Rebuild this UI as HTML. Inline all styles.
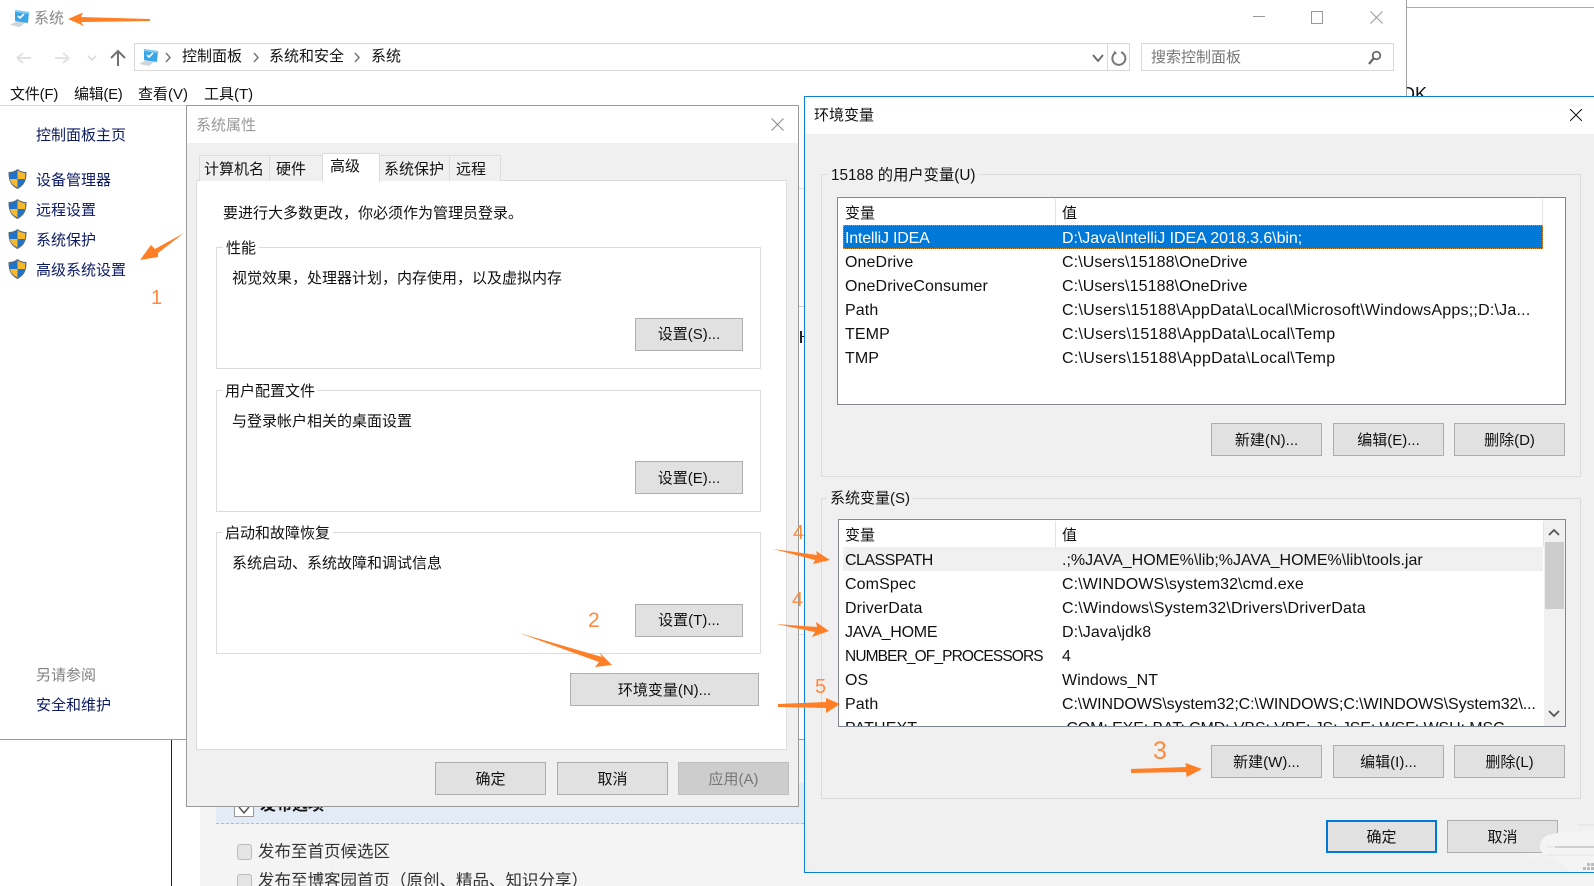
<!DOCTYPE html>
<html lang="zh-CN"><head><meta charset="utf-8"><title>系统</title>
<style>
html,body{margin:0;padding:0;background:#fff;}
#p{position:relative;width:1594px;height:886px;overflow:hidden;background:#fff;font-family:"Liberation Sans","Noto Sans CJK SC",sans-serif;font-size:15px;color:#111;text-spacing-trim:space-all;}
.a{position:absolute;box-sizing:border-box;}
.t{position:absolute;white-space:nowrap;line-height:20px;height:20px;margin-top:1px;}
.b{position:absolute;box-sizing:border-box;background:#e1e1e1;border:1px solid #adadad;text-align:center;white-space:nowrap;font-size:15px;color:#111;}
.g{position:absolute;box-sizing:border-box;border:1px solid #dcdcdc;}
.n{color:#0c1a63;}
.tab{position:absolute;box-sizing:border-box;top:155px;height:26px;background:#f0f0f0;border:1px solid #dcdcdc;border-bottom:0;}
.r{font-size:16px;letter-spacing:.1px;}
.num{position:absolute;color:#ff8a3c;font-size:20px;line-height:20px;font-weight:normal;}
</style></head><body><div id="p">

<!-- background page underneath -->
<div class="a" style="left:200px;top:739px;width:1394px;height:147px;background:#f4f4f4"></div>
<div class="a" style="left:171px;top:739px;width:1px;height:147px;background:#222"></div>
<div class="a" style="left:216px;top:783px;width:1378px;height:41px;background:#e3ecf6;border-bottom:1px dashed #bbb"></div>
<div class="a" style="left:234px;top:797px;width:20px;height:20px;background:#fff;border:1px solid #999"></div>
<svg class="a" style="left:237px;top:806px" width="14" height="9" viewBox="0 0 14 9" fill="none"><path d="M2 1l5 6 5-6" stroke="#555" stroke-width="1.500"/></svg>
<div class="t" style="left:260px;top:795px;font-size:16px;font-weight:bold">发布选项</div>
<div class="a" style="left:237px;top:844px;width:15px;height:16px;background:#e4e4e4;border:1px solid #bbb;border-radius:3px"></div>
<div class="t" style="left:258px;top:841px;font-size:16.500px;color:#333">发布至首页候选区</div>
<div class="a" style="left:237px;top:874px;width:15px;height:16px;background:#e4e4e4;border:1px solid #bbb;border-radius:3px"></div>
<div class="t" style="left:258px;top:870px;font-size:16.500px;color:#333">发布至博客园首页（原创、精品、知识分享）</div>

<!-- top right fragment -->
<div class="a" style="left:1406px;top:7px;width:188px;height:1px;background:#aaa"></div>
<div class="a" style="left:1407px;top:80px;width:30px;height:17px;overflow:hidden"><div class="t" style="left:-6px;top:3px;font-size:18px;line-height:20px;color:#111">OK</div></div>

<!-- main window -->
<div class="a" style="left:0;top:0;width:1407px;height:740px;background:#fff;border-right:1px solid #a0a0a0;border-bottom:1px solid #999"></div>
<svg class="a" style="left:9px;top:8px" width="22" height="20" viewBox="0 0 22 20"><path d="M1 17l7-4 9 1-6 5z" fill="#d0d5d9"/><path d="M6 2l14 2-1 11-13-2z" fill="#39a6e8"/><path d="M6 2l14 2-1 2-13-2z" fill="#7fcdf5"/><path d="M9 8l2 2 4-4" stroke="#fff" stroke-width="1.600" fill="none"/></svg>
<div class="t" style="left:34px;top:8px;color:#888">系统</div>
<svg class="a" style="left:14px;top:46px" width="120" height="24" viewBox="0 0 120 24" fill="none"><path d="M3 12H17M3 12l6-5M3 12l6 5" stroke="#e2e2e2" stroke-width="2"/><path d="M41 12H55M55 12l-6-5M55 12l-6 5" stroke="#e2e2e2" stroke-width="2"/><path d="M74 10l4 4 4-4" stroke="#dcdcdc" stroke-width="1.600"/><path d="M104 20V5M97 12l7-7 7 7" stroke="#707070" stroke-width="2"/></svg>
<div class="a" style="left:134px;top:43px;width:996px;height:28px;border:1px solid #d9d9d9"></div>
<svg class="a" style="left:138px;top:47px" width="22" height="20" viewBox="0 0 22 20"><path d="M1 17l7-4 9 1-6 5z" fill="#d0d5d9"/><path d="M6 2l14 2-1 11-13-2z" fill="#39a6e8"/><path d="M6 2l14 2-1 2-13-2z" fill="#7fcdf5"/><path d="M9 8l2 2 4-4" stroke="#fff" stroke-width="1.600" fill="none"/></svg>
<svg class="a" style="left:160px;top:48px" width="210" height="20" viewBox="0 0 210 20" fill="none" stroke="#777" stroke-width="1.500"><path d="M6 5l4 4.500-4 4.500M94 5l4 4.500-4 4.500M195 5l4 4.500-4 4.500"/></svg>
<div class="t" style="left:182px;top:46px">控制面板</div>
<div class="t" style="left:269px;top:46px">系统和安全</div>
<div class="t" style="left:371px;top:46px">系统</div>
<svg class="a" style="left:1090px;top:50px" width="16" height="16" viewBox="0 0 16 16" fill="none"><path d="M3 5l5 6 5-6" stroke="#666" stroke-width="1.800"/></svg>
<div class="a" style="left:1107px;top:43px;width:1px;height:28px;background:#d9d9d9"></div>
<svg class="a" style="left:1110px;top:49px" width="18" height="18" viewBox="0 0 18 18" fill="none"><path d="M6 3.500a6.500 6.500 0 1 0 5-.3" stroke="#777" stroke-width="2"/><path d="M4 1.500l3 3-3.500 1.500z" fill="#777"/></svg>
<div class="a" style="left:1141px;top:43px;width:253px;height:28px;border:1px solid #d9d9d9"></div>
<div class="t" style="left:1151px;top:47px;color:#777">搜索控制面板</div>
<svg class="a" style="left:1367px;top:50px" width="16" height="16" viewBox="0 0 16 16" fill="none"><circle cx="9.500" cy="5.500" r="3.800" stroke="#666" stroke-width="1.700"/><path d="M6.500 8.500L2 14" stroke="#666" stroke-width="2.200"/></svg>
<div class="a" style="left:1253px;top:16px;width:12px;height:1px;background:#999"></div>
<div class="a" style="left:1311px;top:11px;width:12px;height:13px;border:1px solid #999"></div>
<svg class="a" style="left:1370px;top:11px" width="13" height="13" viewBox="0 0 13 13"><path d="M.5.500l12 12M12.500.500l-12 12" stroke="#999" fill="none"/></svg>

<div class="t" style="left:10px;top:84px;letter-spacing:-.2px">文件(F)</div>
<div class="t" style="left:74px;top:84px;letter-spacing:-.3px">编辑(E)</div>
<div class="t" style="left:138px;top:84px">查看(V)</div>
<div class="t" style="left:204px;top:84px">工具(T)</div>
<div class="a" style="left:0;top:105px;width:187px;height:1px;background:#d9d9d9"></div>

<div class="t n" style="left:36px;top:125px">控制面板主页</div>
<svg width="0" height="0" style="position:absolute"><defs><g id="sh"><path d="M9.500 0C7 2 4 3 .5 3c0 7 1 13 9 17 8-4 9-10 9-17-3.500 0-6.500-1-9-3z" fill="#5b6b7c"/><path d="M9.500 1.500C7.300 3 4.500 4 1.800 4.200L2 10h7.500z" fill="#1f74c9"/><path d="M9.500 1.500C11.700 3 14.500 4 17.200 4.200L17 10H9.500z" fill="#f8b92c"/><path d="M2 10c.5 3.500 2.500 6 7.500 8.500V10z" fill="#f8b92c"/><path d="M17 10c-.5 3.500-2.500 6-7.500 8.500V10z" fill="#1f74c9"/></g></defs></svg>
<svg class="a" style="left:8px;top:169px" width="20" height="21"><use href="#sh"/></svg>
<div class="t n" style="left:36px;top:170px">设备管理器</div>
<svg class="a" style="left:8px;top:199px" width="20" height="21"><use href="#sh"/></svg>
<div class="t n" style="left:36px;top:200px">远程设置</div>
<svg class="a" style="left:8px;top:229px" width="20" height="21"><use href="#sh"/></svg>
<div class="t n" style="left:36px;top:230px">系统保护</div>
<svg class="a" style="left:8px;top:259px" width="20" height="21"><use href="#sh"/></svg>
<div class="t n" style="left:36px;top:260px">高级系统设置</div>
<div class="t" style="left:36px;top:665px;color:#808080">另请参阅</div>
<div class="t n" style="left:36px;top:695px">安全和维护</div>

<!-- gap fragments between dialogs -->
<div class="a" style="left:798px;top:188px;width:7px;height:1px;background:#ddd"></div>
<div class="a" style="left:798px;top:306px;width:7px;height:1px;background:#ccc"></div>
<div class="a" style="left:798px;top:634px;width:7px;height:1px;background:#ddd"></div>
<div class="a" style="left:800px;top:331px;width:2px;height:12px;background:#222"></div>
<div class="a" style="left:802px;top:336px;width:3px;height:1px;background:#222"></div>

<!-- system properties dialog -->
<div class="a" style="left:186px;top:105px;width:613px;height:702px;background:#f0f0f0;border:1px solid #999"></div>
<div class="a" style="left:187px;top:106px;width:611px;height:37px;background:#fff"></div>
<div class="t" style="left:196px;top:115px;color:#999">系统属性</div>
<svg class="a" style="left:771px;top:118px" width="13" height="13" viewBox="0 0 13 13"><path d="M.5.500l12 12M12.500.500l-12 12" stroke="#8a8a8a" fill="none"/></svg>
<div class="a" style="left:196px;top:180px;width:591px;height:570px;background:#fff;border:1px solid #dcdcdc"></div>
<div class="tab" style="left:199px;width:71px"></div>
<div class="tab" style="left:269px;width:55px"></div>
<div class="tab" style="left:322px;width:58px;top:153px;height:29px;background:#fff"></div>
<div class="tab" style="left:379px;width:71px"></div>
<div class="tab" style="left:449px;width:52px"></div>
<div class="t" style="left:204px;top:159px">计算机名</div>
<div class="t" style="left:276px;top:159px">硬件</div>
<div class="t" style="left:330px;top:156px">高级</div>
<div class="t" style="left:384px;top:159px">系统保护</div>
<div class="t" style="left:456px;top:159px">远程</div>
<div class="t" style="left:223px;top:203px">要进行大多数更改，你必须作为管理员登录。</div>

<div class="g" style="left:216px;top:247px;width:545px;height:122px"></div>
<div class="t" style="left:223px;top:238px;background:#fff;padding:0 3px">性能</div>
<div class="t" style="left:232px;top:268px">视觉效果，处理器计划，内存使用，以及虚拟内存</div>
<div class="b" style="left:635px;top:318px;width:108px;height:33px;line-height:32px">设置(S)...</div>

<div class="g" style="left:216px;top:390px;width:545px;height:122px"></div>
<div class="t" style="left:222px;top:381px;background:#fff;padding:0 3px">用户配置文件</div>
<div class="t" style="left:232px;top:411px">与登录帐户相关的桌面设置</div>
<div class="b" style="left:635px;top:461px;width:108px;height:33px;line-height:33px">设置(E)...</div>

<div class="g" style="left:216px;top:532px;width:545px;height:122px"></div>
<div class="t" style="left:222px;top:523px;background:#fff;padding:0 3px">启动和故障恢复</div>
<div class="t" style="left:232px;top:553px">系统启动、系统故障和调试信息</div>
<div class="b" style="left:635px;top:604px;width:108px;height:33px;line-height:32px">设置(T)...</div>

<div class="b" style="left:570px;top:673px;width:189px;height:33px;line-height:33px">环境变量(N)...</div>
<div class="b" style="left:435px;top:762px;width:111px;height:33px;line-height:33px">确定</div>
<div class="b" style="left:557px;top:762px;width:111px;height:33px;line-height:33px">取消</div>
<div class="b" style="left:678px;top:762px;width:111px;height:33px;line-height:33px;background:#cdcdcd;border-color:#bfbfbf;color:#777">应用(A)</div>

<!-- env vars dialog -->
<div class="a" style="left:804px;top:96px;width:800px;height:777px;background:#f0f0f0;border:1px solid #0c7fd6"></div>
<div class="a" style="left:805px;top:97px;width:789px;height:37px;background:#fff"></div>
<div class="t" style="left:814px;top:105px">环境变量</div>
<svg class="a" style="left:1570px;top:109px" width="12" height="12" viewBox="0 0 12 12"><path d="M0 0l12 12M12 0L0 12" stroke="#111" fill="none"/></svg>

<div class="g" style="left:821px;top:174px;width:760px;height:303px"></div>
<div class="t" style="left:828px;top:165px;background:#f0f0f0;padding:0 3px;font-size:15.300px">15188 的用户变量(U)</div>
<div class="a" style="left:837px;top:197px;width:729px;height:208px;background:#fff;border:1px solid #828790"></div>
<div class="a" style="left:1055px;top:199px;width:1px;height:26px;background:#e5e5e5"></div>
<div class="a" style="left:1542px;top:199px;width:1px;height:26px;background:#e5e5e5"></div>
<div class="t" style="left:845px;top:203px">变量</div>
<div class="t" style="left:1062px;top:203px">值</div>
<div class="a" style="left:843px;top:225px;width:700px;height:24px;background:#0078d7;outline:1px dotted #e08a30;outline-offset:-1px"></div>
<div class="t r" style="left:845px;top:228px;color:#fff;letter-spacing:-.2px">IntelliJ IDEA</div>
<div class="t r" style="left:1062px;top:228px;color:#fff;letter-spacing:-.05px">D:\Java\IntelliJ IDEA 2018.3.6\bin;</div>
<div class="t r" style="left:845px;top:252px">OneDrive</div><div class="t r" style="left:1062px;top:252px">C:\Users\15188\OneDrive</div>
<div class="t r" style="left:845px;top:276px">OneDriveConsumer</div><div class="t r" style="left:1062px;top:276px">C:\Users\15188\OneDrive</div>
<div class="t r" style="left:845px;top:300px">Path</div><div class="t r" style="left:1062px;top:300px;letter-spacing:.22px">C:\Users\15188\AppData\Local\Microsoft\WindowsApps;;D:\Ja...</div>
<div class="t r" style="left:845px;top:324px">TEMP</div><div class="t r" style="left:1062px;top:324px;letter-spacing:.28px">C:\Users\15188\AppData\Local\Temp</div>
<div class="t r" style="left:845px;top:348px">TMP</div><div class="t r" style="left:1062px;top:348px;letter-spacing:.28px">C:\Users\15188\AppData\Local\Temp</div>

<div class="b" style="left:1211px;top:423px;width:111px;height:33px;line-height:33px">新建(N)...</div>
<div class="b" style="left:1333px;top:423px;width:111px;height:33px;line-height:33px">编辑(E)...</div>
<div class="b" style="left:1454px;top:423px;width:111px;height:33px;line-height:33px">删除(D)</div>

<div class="g" style="left:821px;top:498px;width:760px;height:301px"></div>
<div class="t" style="left:827px;top:488px;background:#f0f0f0;padding:0 3px">系统变量(S)</div>
<div class="a" style="left:838px;top:519px;width:728px;height:208px;background:#fff;border:1px solid #828790;overflow:hidden">
 <div class="a" style="left:216px;top:1px;width:1px;height:26px;background:#e5e5e5"></div>
 <div class="a" style="left:704px;top:1px;width:1px;height:26px;background:#e5e5e5"></div>
 <div class="t" style="left:6px;top:5px">变量</div>
 <div class="t" style="left:223px;top:5px">值</div>
 <div class="a" style="left:4px;top:27px;width:700px;height:24px;background:#f0f0f0"></div>
 <div class="t r" style="left:6px;top:30px;letter-spacing:-.55px">CLASSPATH</div><div class="t r" style="left:223px;top:30px;letter-spacing:0">.;%JAVA_HOME%\lib;%JAVA_HOME%\lib\tools.jar</div>
 <div class="t r" style="left:6px;top:54px">ComSpec</div><div class="t r" style="left:223px;top:54px">C:\WINDOWS\system32\cmd.exe</div>
 <div class="t r" style="left:6px;top:78px">DriverData</div><div class="t r" style="left:223px;top:78px;letter-spacing:.18px">C:\Windows\System32\Drivers\DriverData</div>
 <div class="t r" style="left:6px;top:102px;letter-spacing:-.25px">JAVA_HOME</div><div class="t r" style="left:223px;top:102px">D:\Java\jdk8</div>
 <div class="t r" style="left:6px;top:126px;font-size:15.500px;letter-spacing:-.88px">NUMBER_OF_PROCESSORS</div><div class="t r" style="left:223px;top:126px">4</div>
 <div class="t r" style="left:6px;top:150px">OS</div><div class="t r" style="left:223px;top:150px">Windows_NT</div>
 <div class="t r" style="left:6px;top:174px">Path</div><div class="t r" style="left:223px;top:174px;letter-spacing:-.1px">C:\WINDOWS\system32;C:\WINDOWS;C:\WINDOWS\System32\...</div>
 <div class="t r" style="left:6px;top:198px">PATHEXT</div><div class="t r" style="left:223px;top:198px;letter-spacing:-.1px">.COM;.EXE;.BAT;.CMD;.VBS;.VBE;.JS;.JSE;.WSF;.WSH;.MSC</div>
 <div class="a" style="left:705px;top:0;width:21px;height:206px;background:#f0f0f0"></div>
 <div class="a" style="left:706px;top:22px;width:19px;height:67px;background:#cdcdcd"></div>
 <svg class="a" style="left:708px;top:6px" width="14" height="12" viewBox="0 0 14 12" fill="none"><path d="M2 9l5-5 5 5" stroke="#555" stroke-width="1.800"/></svg>
 <svg class="a" style="left:708px;top:188px" width="14" height="12" viewBox="0 0 14 12" fill="none"><path d="M2 3l5 5 5-5" stroke="#555" stroke-width="1.800"/></svg>
</div>

<div class="b" style="left:1211px;top:745px;width:111px;height:33px;line-height:33px">新建(W)...</div>
<div class="b" style="left:1333px;top:745px;width:111px;height:33px;line-height:33px">编辑(I)...</div>
<div class="b" style="left:1454px;top:745px;width:111px;height:33px;line-height:33px">删除(L)</div>
<div class="b" style="left:1326px;top:820px;width:111px;height:33px;line-height:31px;border:2px solid #0078d7">确定</div>
<div class="b" style="left:1447px;top:820px;width:111px;height:33px;line-height:33px">取消</div>

<!-- watermark -->
<svg class="a" style="left:1500px;top:800px" width="94" height="72" viewBox="0 0 94 72">
<path d="M40 46c0-6 6-12 14-12 4-2 14-3 40-3v41H70c-6-6-8-12-18-14-6-1-12-4-12-12z" fill="#f4f4f4"/>
<path d="M26 53h14v4H30z" fill="#f4f4f4"/>
<path d="M55 47h39" stroke="#aaa" stroke-width="1"/>
<path d="M78 25h16" stroke="#e0e0e0" stroke-width="1"/>
<path d="M46 55h48M46 47h9" stroke="#e4e4e4" stroke-width="1"/>
<path d="M87 63h3v3h-3zM91 63h3v3h-3zM83 67h3v3h-3zM87 67h3v3h-3zM91 67h3v3h-3z" fill="#bbb"/>
</svg>

<!-- annotations -->
<svg class="a" style="left:0;top:0" width="1594" height="886" fill="#ff7f27">
<polygon points="68,19 83,12.500 81,17 150,19 150,21 81,22 84,26"/>
<polygon points="140,260 151,245 155,249 184,233 158,253 158,257"/>
<polygon points="519,633 602,657 599,652 612,665 595,667 599,662"/>
<polygon points="773,549 817,555 816,551 830,560 813,564 815,560"/>
<polygon points="776,624 817,627 816,622 829,631 812,637 815,632"/>
<polygon points="778,704 826,702 826,698 840,704 826,713 826,708 778,707"/>
<polygon points="1131,769 1186,767 1185.500,763 1202,769 1186.600,777 1186,772 1131,773"/>
</svg>
<div class="num" style="left:151px;top:288px">1</div>
<div class="num" style="left:588px;top:611px;font-size:21px">2</div>
<div class="num" style="left:1153px;top:739px;font-size:25px;line-height:25px">3</div>
<div class="num" style="left:793px;top:523px">4</div>
<div class="num" style="left:792px;top:590px">4</div>
<div class="num" style="left:815px;top:677px">5</div>

</div></body></html>
